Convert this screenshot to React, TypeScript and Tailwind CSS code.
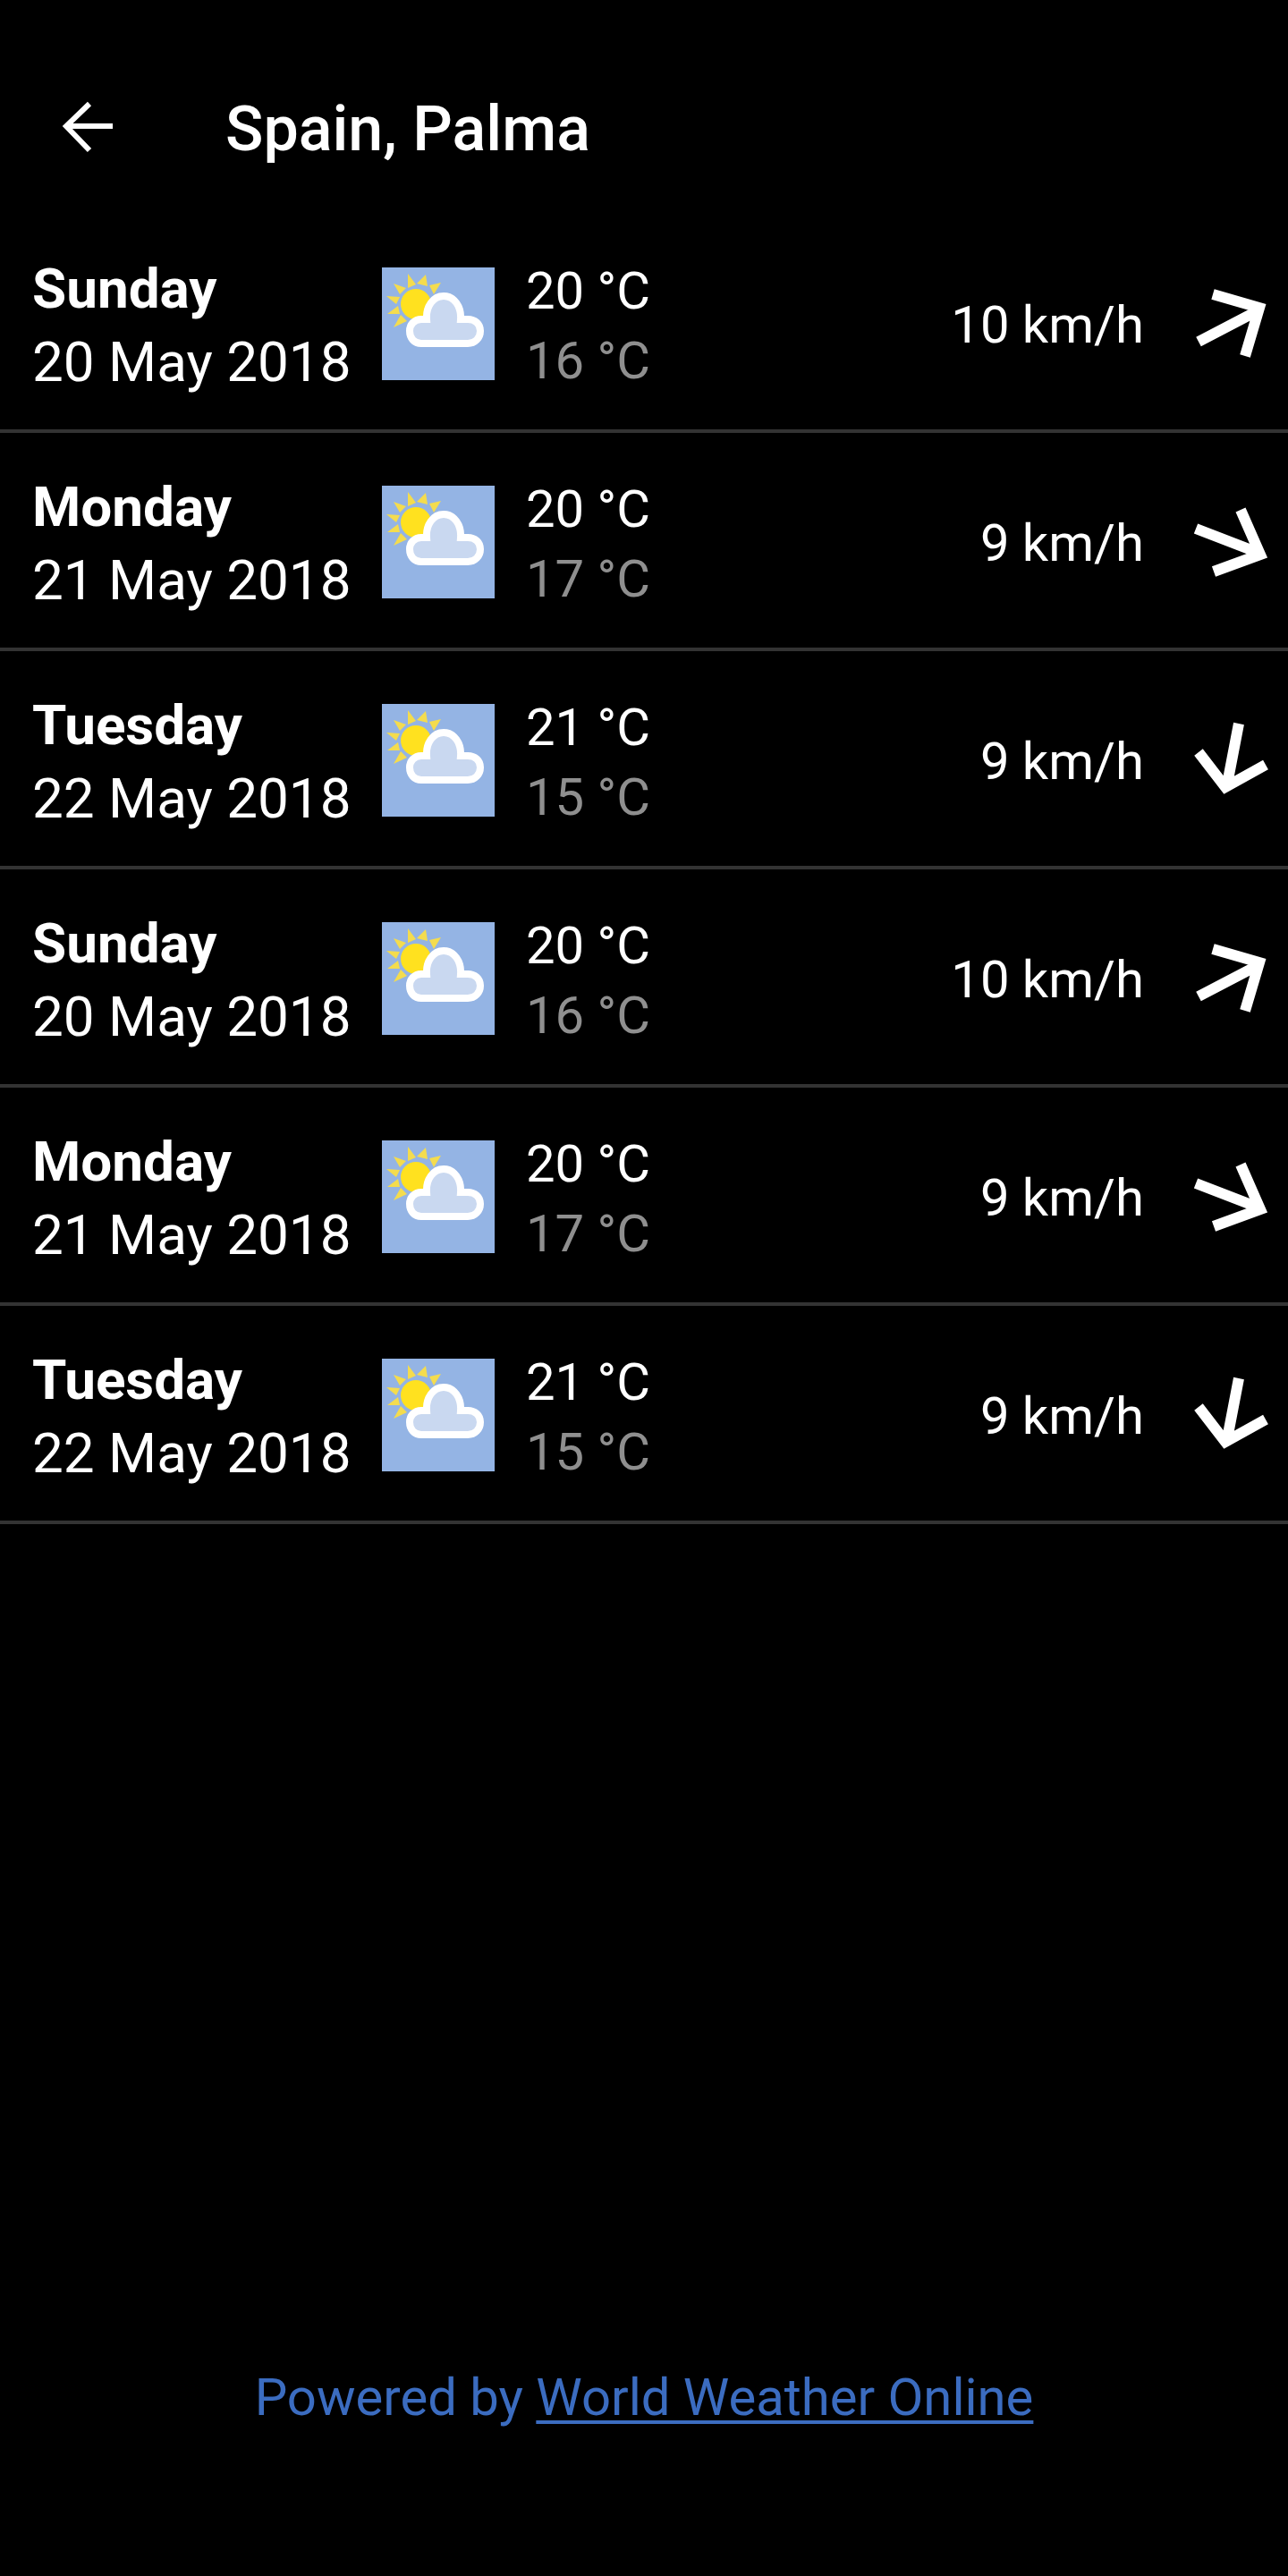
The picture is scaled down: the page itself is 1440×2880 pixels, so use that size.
const forecast = [
  { day: "Sunday", date: "20 May 2018", high: "20 °C", low: "16 °C", wind: "10 km/h", heading: "ne" },
  { day: "Monday", date: "21 May 2018", high: "20 °C", low: "17 °C", wind: "9 km/h", heading: "se" },
  { day: "Tuesday", date: "22 May 2018", high: "21 °C", low: "15 °C", wind: "9 km/h", heading: "s" },
  { day: "Sunday", date: "20 May 2018", high: "20 °C", low: "16 °C", wind: "10 km/h", heading: "ne" },
  { day: "Monday", date: "21 May 2018", high: "20 °C", low: "17 °C", wind: "9 km/h", heading: "se" },
  { day: "Tuesday", date: "22 May 2018", high: "21 °C", low: "15 °C", wind: "9 km/h", heading: "s" },
] as const;

const windPaths = {
  ne: "M11 68 L78 33 M27 15 L79 30 L63 84",
  se: "M8 33 L78 60 M58 12 L80 62 L28 81",
  s: "M56 7 L42 80 M11 39 L41 78 L86 53",
};

function BackArrow() {
  return (
    <svg width="60" height="60" viewBox="0 0 60 60" fill="none" className="shrink-0">
      <path d="M58 29 H8 M32 4 L6 29 L32 56" stroke="white" strokeWidth="6" />
    </svg>
  );
}

function WindArrow({ heading }: { heading: keyof typeof windPaths }) {
  return (
    <svg width="96" height="96" viewBox="0 0 96 96" fill="none" className="shrink-0">
      <path d={windPaths[heading]} stroke="white" strokeWidth="12" strokeMiterlimit="6" />
    </svg>
  );
}

// partly cloudy tile: sun with rays behind a white-edged cloud
function WeatherIcon() {
  return (
    <svg width="126" height="126" viewBox="0 0 126 126" className="shrink-0">
      <rect width="126" height="126" fill="#94b4e4" />
      <g fill="#f4dc4e">
        <polygon points="29,7 38,19 29,23" />
        <polygon points="49,8 51,21 39,18" />
        <polygon points="66,17 53,20 58,30" />
        <polygon points="13,18 27,23 20,30" />
        <polygon points="5,32 20,33 16,41" />
        <polygon points="6,52 18,43 20,52" />
        <polygon points="13,67 21,53 28,60" />
      </g>
      <circle cx="38" cy="41" r="17" fill="#ffe11f" />
      <path
        d="M44 85 H96 C104 85 110 79 110 71 C110 63 104 58 96 58 H88 C89 44 81 32 69 32 C57 32 49 44 50 58 H44 C36 58 31 64 31 71 C31 79 36 85 44 85 Z"
        fill="#c9d8f0"
        stroke="white"
        strokeWidth="8"
      />
    </svg>
  );
}

export default function App() {
  return (
    <div className="flex h-[2880px] w-full flex-col bg-black font-['Roboto',sans-serif] text-white">
      <header className="flex h-[240px] shrink-0 items-start pt-[112px] pl-[68px]">
        <BackArrow />
        <h1 className="ml-[124px] text-[70px] leading-[64px] font-medium">Spain, Palma</h1>
      </header>

      <ul>
        {forecast.map((item, i) => (
          <li key={i} className="flex h-[244px] items-center border-b-4 border-[#333333] pt-[4px] pr-[15px] pl-[36px]">
            <div className="w-[391px] shrink-0 pt-[3px] text-[62px] leading-[82px]">
              <p className="font-bold">{item.day}</p>
              <p>{item.date}</p>
            </div>
            <WeatherIcon />
            <div className="ml-[35px] flex-1 pt-[4px] text-[58px] leading-[78px]">
              <p>{item.high}</p>
              <p className="text-[#8f8f8f]">{item.low}</p>
            </div>
            <span className="mr-[50px] pt-[2px] text-[58px] leading-none">{item.wind}</span>
            <WindArrow heading={item.heading} />
          </li>
        ))}
      </ul>

      <footer className="mt-auto pb-[168px] text-center text-[58px] leading-[64px] text-[#3b6cc0]">
        Powered by <a className="underline decoration-4 underline-offset-[6px]">World Weather Online</a>
      </footer>
    </div>
  );
}
